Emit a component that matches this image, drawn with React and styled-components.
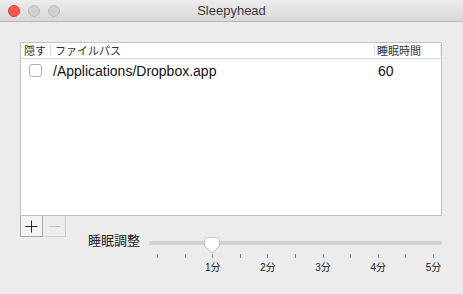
import React from "react";
import styled, { createGlobalStyle } from "styled-components";

const Global = createGlobalStyle`
  html, body { margin: 0; padding: 0; background: #ececec; }
  body { font-family: "Liberation Sans", "Noto Sans CJK JP", sans-serif; }
`;

const Window = styled.div`
  width: 463px;
  height: 294px;
  background: #ececec;
  display: flex;
  flex-direction: column;
  overflow: hidden;
`;

const TitleBar = styled.div`
  height: 21px;
  flex: none;
  border-bottom: 1px solid #b9b9b9;
  background: linear-gradient(#ededed, #d8d8d8);
  display: flex;
  align-items: center;
  position: relative;
`;

const Lights = styled.div`
  display: flex;
  gap: 8px;
  padding-left: 8px;
`;

const Light = styled.span`
  width: 12px;
  height: 12px;
  border-radius: 50%;
  box-sizing: border-box;
  background: ${(p) => (p.$red ? "#fc5753" : "#d0d0d0")};
  border: 1px solid ${(p) => (p.$red ? "#df3d39" : "#bcbcbc")};
`;

const Title = styled.div`
  position: absolute;
  left: 0;
  right: 0;
  text-align: center;
  font-size: 13px;
  color: #3c3c3c;
  pointer-events: none;
`;

const Body = styled.div`
  padding: 20px 21px 0 20px;
  display: flex;
  flex-direction: column;
`;

const Table = styled.div`
  height: 174px;
  box-sizing: border-box;
  border: 1px solid #c3c3c3;
  background: #fff;
`;

const HeaderRow = styled.div`
  display: grid;
  grid-template-columns: 30px 324px 1fr;
  height: 15px;
  border-bottom: 1px solid #dadada;
  font-size: 11px;
  color: #333;
  font-family: "Noto Sans CJK JP", sans-serif;
`;

const HeadCell = styled.div`
  display: flex;
  align-items: center;
  padding-left: ${(p) => p.$pad || 3}px;
  border-right: 1px solid ${(p) => (p.$last ? "#e6e6e6" : "#dcdcdc")};
  margin: 2px 0;
  line-height: 11px;
`;

const Row = styled.div`
  display: grid;
  grid-template-columns: 30px 324px 1fr;
  height: 23px;
  align-items: center;
  font-size: 14px;
  color: #111;
`;

const Check = styled.span`
  width: 13px;
  height: 13px;
  box-sizing: border-box;
  border: 1px solid #b0b0b0;
  border-radius: 3px;
  background: #fff;
  margin-left: 8px;
`;

const Cell = styled.div`
  padding-left: ${(p) => p.$pad || 2}px;
`;

const ButtonBar = styled.div`
  display: flex;
`;

const SquareButton = styled.div`
  width: 23px;
  height: 21px;
  box-sizing: border-box;
  border: 1px solid ${(p) => (p.$off ? "#cfcfcf" : "#a9a9a9")};
  border-top: none;
  border-left: ${(p) => (p.$off ? "none" : undefined)};
  background: ${(p) => (p.$off ? "#ededed" : "#f3f3f3")};
  display: flex;
  align-items: center;
  justify-content: center;
`;

const SliderRow = styled.div`
  display: flex;
  align-items: flex-start;
  margin-top: 0;
`;

const Label = styled.div`
  width: 129px;
  box-sizing: border-box;
  padding-right: 9px;
  text-align: right;
  font-size: 13px;
  color: #222;
  font-family: "Noto Sans CJK JP", sans-serif;
  line-height: 18px;
  margin-top: -6px;
`;

const Slider = styled.div`
  flex: 1;
  display: flex;
  flex-direction: column;
`;

const TrackArea = styled.div`
  position: relative;
  height: 17px;
  display: flex;
  align-items: flex-start;
`;

const Track = styled.div`
  height: 4px;
  width: 100%;
  margin-top: 4px;
  border-radius: 2px;
  background: #d0d0d0;
`;

const Knob = styled.svg`
  position: absolute;
  top: 0;
  transform: translateX(-50%);
`;

const Ticks = styled.div`
  display: flex;
  justify-content: space-between;
  padding: 0 8px 0 8px;
  margin-top: 0;
`;

const Tick = styled.div`
  width: 1px;
  display: flex;
  flex-direction: column;
  align-items: center;
`;

const TickLine = styled.span`
  width: 1px;
  height: 4px;
  background: #8a8a8a;
`;

const TickLabel = styled.span`
  margin-top: 1px;
  white-space: nowrap;
  font-size: 10px;
  color: #222;
  font-family: "Liberation Sans", "Noto Sans CJK JP", sans-serif;
`;

const ticks = Array.from({ length: 11 }, (_, i) =>
  i >= 2 && i % 2 === 0 ? `${i / 2}分` : null
);

export default function App() {
  const value = 2 / 10;
  return (
    <Window>
      <Global />
      <TitleBar>
        <Lights>
          <Light $red />
          <Light />
          <Light />
        </Lights>
        <Title>Sleepyhead</Title>
      </TitleBar>
      <Body>
        <Table>
          <HeaderRow>
            <HeadCell>隠す</HeadCell>
            <HeadCell $pad={4}>ファイルパス</HeadCell>
            <HeadCell $last $pad={2}>睡眠時間</HeadCell>
          </HeaderRow>
          <Row>
            <Check />
            <Cell>/Applications/Dropbox.app</Cell>
            <Cell $pad={3}>60</Cell>
          </Row>
        </Table>
        <ButtonBar>
          <SquareButton>
            <svg width="13" height="13" viewBox="0 0 13 13">
              <path d="M6.5 0.5v12M0.5 6.5h12" stroke="#222" strokeWidth="1" />
            </svg>
          </SquareButton>
          <SquareButton $off>
            <svg width="13" height="13" viewBox="0 0 13 13">
              <path d="M0.5 6.5h12" stroke="#c4c4c4" strokeWidth="1" />
            </svg>
          </SquareButton>
        </ButtonBar>
        <SliderRow>
          <Label>睡眠調整</Label>
          <Slider>
            <TrackArea>
              <Track />
              <Knob
                width="16"
                height="17"
                viewBox="0 0 16 17"
                style={{ left: `calc(8px + (100% - 16px) * ${value})` }}
              >
                <path
                  d="M0.5 3.5a3 3 0 0 1 3-3h9a3 3 0 0 1 3 3v6l-7.5 6.5l-7.5-6.5z"
                  fill="#fff"
                  stroke="#c2c2c2"
                  strokeWidth="1"
                />
              </Knob>
            </TrackArea>
            <Ticks>
              {ticks.map((t, i) => (
                <Tick key={i}>
                  <TickLine />
                  {t && <TickLabel>{t}</TickLabel>}
                </Tick>
              ))}
            </Ticks>
          </Slider>
        </SliderRow>
      </Body>
    </Window>
  );
}
